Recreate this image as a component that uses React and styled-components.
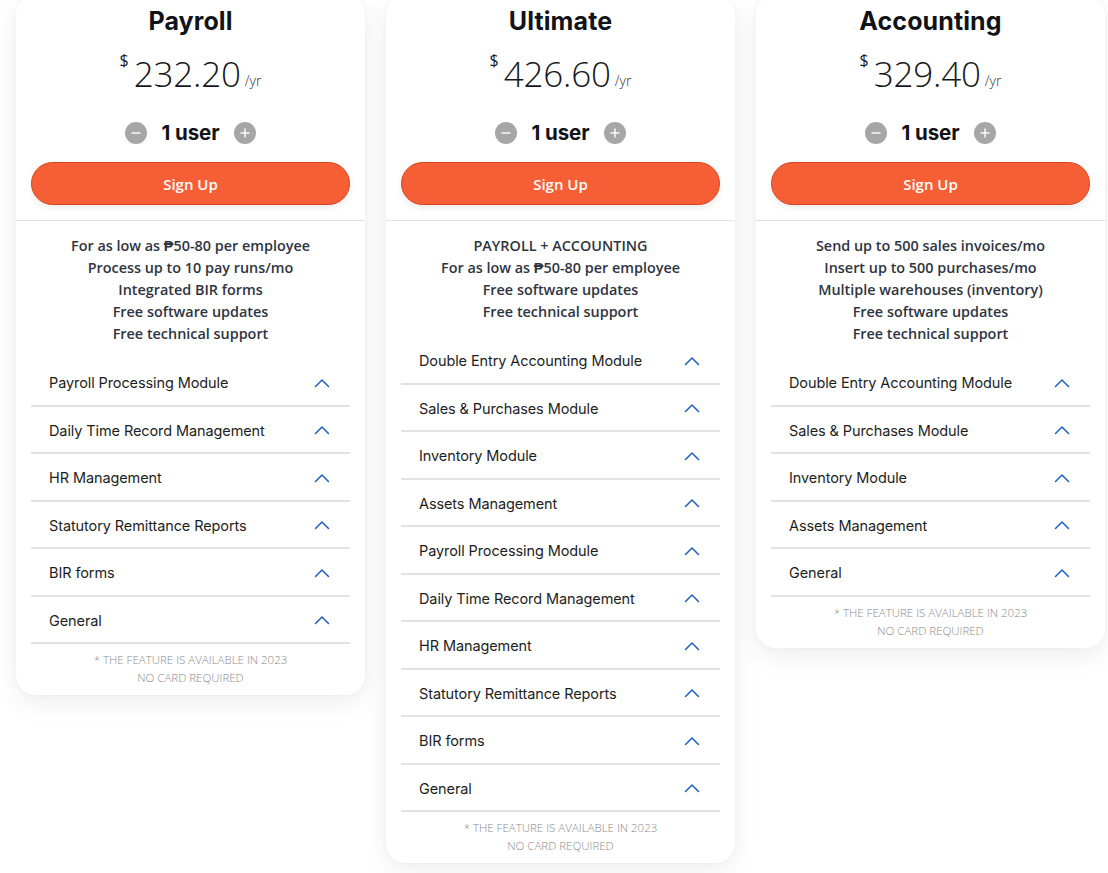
import React from "react";
import styled, { createGlobalStyle } from "styled-components";

const Global = createGlobalStyle`
  html, body { margin: 0; padding: 0; background: #ffffff; }
  body { font-family: "Open Sans", "Liberation Sans", sans-serif; overflow: hidden; }
  * { box-sizing: border-box; }
`;

const Page = styled.div`
  display: flex;
  align-items: flex-start;
  gap: 21px;
  padding: 0 0 0 16px;
  margin-top: -5px;
  width: 1108px;
  height: 878px;
`;

const Card = styled.div`
  width: 349px;
  flex: 0 0 349px;
  background: #fff;
  border-radius: 20px;
  box-shadow: 0 8px 26px rgba(0, 0, 0, 0.07), 0 0 6px rgba(0, 0, 0, 0.03);
  padding: 10px 0 8px;
  display: flex;
  flex-direction: column;
  align-items: center;
`;

const Title = styled.h2`
  margin: 0;
  font-family: "Inter", "DejaVu Sans", sans-serif;
  font-weight: 700;
  font-size: 25px;
  line-height: 32px;
  color: #111318;
  letter-spacing: 0.1px;
`;

const PriceRow = styled.div`
  margin-top: 15px;
  height: 44px;
  display: flex;
  align-items: flex-end;
  justify-content: center;
  color: #15171c;
`;

const Currency = styled.span`
  align-self: flex-start;
  font-size: 16px;
  line-height: 16px;
  margin-right: 5px;
  font-weight: 400;
`;

const Amount = styled.span`
  font-size: 35px;
  font-weight: 300;
  line-height: 44px;
  letter-spacing: -0.2px;
`;

const Per = styled.span`
  font-size: 14px;
  font-weight: 300;
  line-height: 14px;
  margin-left: 4px;
  margin-bottom: 8px;
  color: #333;
`;

const UserRow = styled.div`
  margin-top: 25px;
  height: 24px;
  display: flex;
  align-items: center;
  gap: 15px;
`;

const RoundBtn = styled.button`
  width: 22px;
  height: 22px;
  border-radius: 50%;
  border: none;
  padding: 0;
  background: #a6a6a6;
  display: flex;
  align-items: center;
  justify-content: center;
  cursor: pointer;
`;

const Users = styled.span`
  font-family: "Inter", "DejaVu Sans", sans-serif;
  font-weight: 700;
  font-size: 20.5px;
  line-height: 24px;
  color: #111318;
  letter-spacing: -0.1px;
`;

const SignUp = styled.button`
  margin-top: 17px;
  width: 319px;
  height: 43px;
  border-radius: 22px;
  border: 1px solid #d9441f;
  background: #f65f35;
  color: #fff;
  font-family: "Open Sans", "Liberation Sans", sans-serif;
  font-weight: 600;
  font-size: 15px;
  box-shadow: 0 3px 6px rgba(0, 0, 0, 0.08);
  cursor: pointer;
`;

const Divider = styled.div`
  margin-top: 15px;
  width: 100%;
  height: 1px;
  background: #e3e3e3;
`;

const Highlights = styled.ul`
  list-style: none;
  margin: 0;
  padding: 14px 0 0;
  text-align: center;
  font-family: "Open Sans", "Liberation Sans", sans-serif;
  font-weight: 600;
  font-size: 14.4px;
  line-height: 22px;
  color: #2f343f;
`;

const Modules = styled.div`
  margin-top: 14px;
  width: 319px;
  display: flex;
  flex-direction: column;
`;

const ModuleRow = styled.div`
  height: 47.5px;
  border-bottom: 2px solid #e2e2e2;
  display: flex;
  align-items: center;
  justify-content: space-between;
  padding: 2px 20px 0 18px;
  font-family: "Inter", "DejaVu Sans", sans-serif;
  font-size: 14.5px;
  color: #1c1e22;
  letter-spacing: -0.1px;
`;

const Footer = styled.div`
  padding-top: 7px;
  text-align: center;
  font-family: "Open Sans", "Liberation Sans", sans-serif;
  font-weight: 300;
  font-size: 11.5px;
  line-height: 18px;
  color: #8a8a8a;
  text-transform: uppercase;
`;

const Chevron = () => (
  <svg width="16" height="10" viewBox="0 0 16 10" fill="none">
    <polyline points="1.5,8.5 8,2 14.5,8.5" stroke="#1f5fc4" strokeWidth="1.5" strokeLinecap="round" strokeLinejoin="round" />
  </svg>
);

const Minus = () => (
  <svg width="12" height="12" viewBox="0 0 12 12">
    <line x1="1.5" y1="6" x2="10.5" y2="6" stroke="#fff" strokeWidth="1.4" />
  </svg>
);

const Plus = () => (
  <svg width="12" height="12" viewBox="0 0 12 12">
    <line x1="1.5" y1="6" x2="10.5" y2="6" stroke="#fff" strokeWidth="1.4" />
    <line x1="6" y1="1.5" x2="6" y2="10.5" stroke="#fff" strokeWidth="1.4" />
  </svg>
);

const plans = [
  {
    name: "Payroll",
    price: "232.20",
    highlights: [
      "For as low as ₱50-80 per employee",
      "Process up to 10 pay runs/mo",
      "Integrated BIR forms",
      "Free software updates",
      "Free technical support",
    ],
    modules: [
      "Payroll Processing Module",
      "Daily Time Record Management",
      "HR Management",
      "Statutory Remittance Reports",
      "BIR forms",
      "General",
    ],
  },
  {
    name: "Ultimate",
    price: "426.60",
    highlights: [
      "PAYROLL + ACCOUNTING",
      "For as low as ₱50-80 per employee",
      "Free software updates",
      "Free technical support",
    ],
    modules: [
      "Double Entry Accounting Module",
      "Sales & Purchases Module",
      "Inventory Module",
      "Assets Management",
      "Payroll Processing Module",
      "Daily Time Record Management",
      "HR Management",
      "Statutory Remittance Reports",
      "BIR forms",
      "General",
    ],
  },
  {
    name: "Accounting",
    price: "329.40",
    highlights: [
      "Send up to 500 sales invoices/mo",
      "Insert up to 500 purchases/mo",
      "Multiple warehouses (inventory)",
      "Free software updates",
      "Free technical support",
    ],
    modules: [
      "Double Entry Accounting Module",
      "Sales & Purchases Module",
      "Inventory Module",
      "Assets Management",
      "General",
    ],
  },
];

const PlanCard = ({ plan }) => (
  <Card>
    <Title>{plan.name}</Title>
    <PriceRow>
      <Currency>$</Currency>
      <Amount>{plan.price}</Amount>
      <Per>/yr</Per>
    </PriceRow>
    <UserRow>
      <RoundBtn aria-label="remove user"><Minus /></RoundBtn>
      <Users>1 user</Users>
      <RoundBtn aria-label="add user"><Plus /></RoundBtn>
    </UserRow>
    <SignUp>Sign Up</SignUp>
    <Divider />
    <Highlights>
      {plan.highlights.map((h) => (
        <li key={h}>{h}</li>
      ))}
    </Highlights>
    <Modules>
      {plan.modules.map((m) => (
        <ModuleRow key={m}>
          <span>{m}</span>
          <Chevron />
        </ModuleRow>
      ))}
    </Modules>
    <Footer>
      * The feature is available in 2023
      <br />
      No card required
    </Footer>
  </Card>
);

export default function App() {
  return (
    <>
      <Global />
      <Page>
        {plans.map((p) => (
          <PlanCard key={p.name} plan={p} />
        ))}
      </Page>
    </>
  );
}
